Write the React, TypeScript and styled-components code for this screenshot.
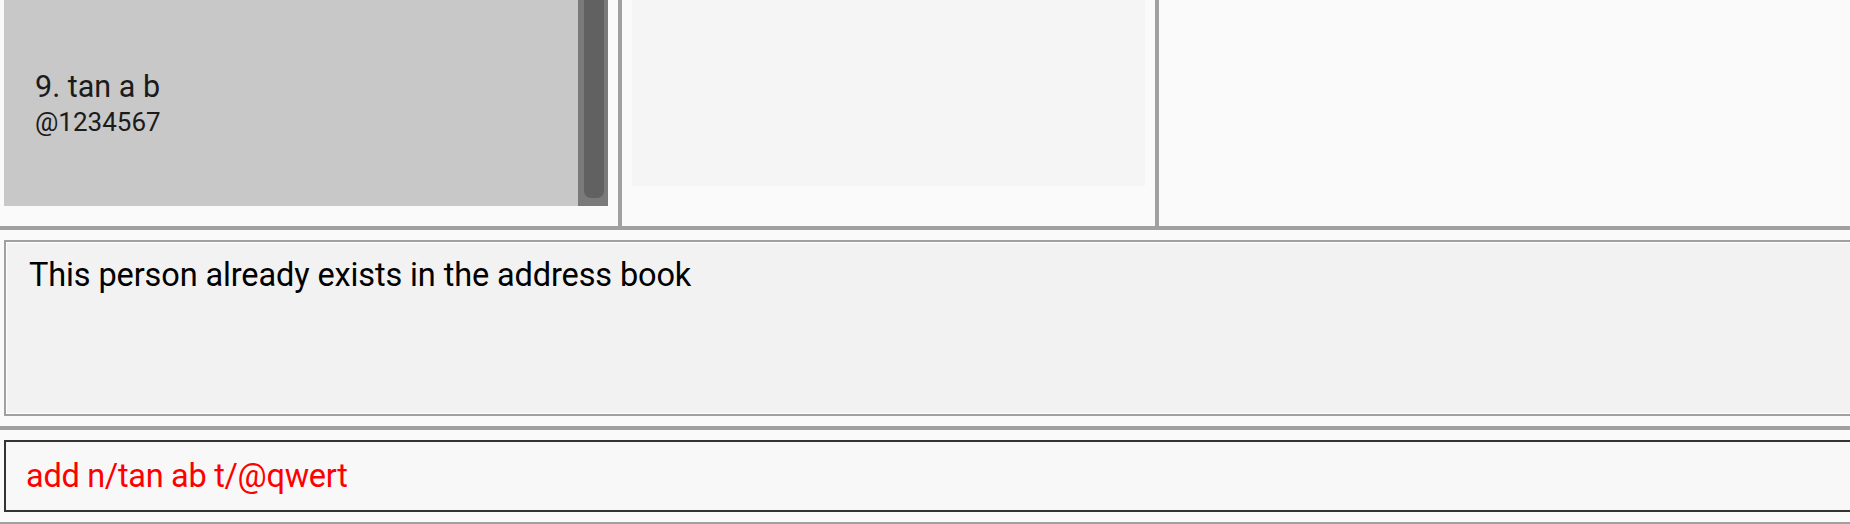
import React from "react";
import styled, { createGlobalStyle } from "styled-components";

const GlobalStyle = createGlobalStyle`
  html, body {
    margin: 0;
    padding: 0;
    background: #fafafa;
    overflow: hidden;
  }
  * {
    box-sizing: border-box;
  }
`;

const Window = styled.div`
  width: 1850px;
  height: 524px;
  display: flex;
  flex-direction: column;
  overflow: hidden;
  background: #fafafa;
  font-family: Roboto, "Liberation Sans", sans-serif;
`;

const TopRow = styled.div`
  display: flex;
  height: 230px;
  flex-shrink: 0;
  border-bottom: 4px solid #a0a0a0;
`;

const Pane = styled.div<{ $width?: number; $divider?: boolean }>`
  display: flex;
  flex: ${(p) => (p.$width ? `0 0 ${p.$width}px` : "1")};
  border-right: ${(p) => (p.$divider ? "4px solid #a0a0a0" : "none")};
`;

const ListPane = styled(Pane)`
  padding: 0 10px 20px 4px;
`;

const DetailPane = styled(Pane)`
  padding: 0 10px 40px 10px;
`;

const Card = styled.div`
  flex: 1;
  display: flex;
  background: #c8c8c8;
`;

const CardBody = styled.div`
  flex: 1;
  display: flex;
  flex-direction: column;
  justify-content: center;
  padding-left: 31px;
  color: #1b1b1b;
`;

const Name = styled.div`
  font-size: 30.5px;
  line-height: 36px;
`;

const Handle = styled.div`
  font-size: 26px;
  line-height: 30px;
  margin-top: 2px;
`;

const ScrollTrack = styled.div`
  width: 30px;
  background: #7a7a7a;
  display: flex;
  padding: 0 4px 8px 6px;
`;

const ScrollThumb = styled.div`
  flex: 1;
  background: #616161;
  border-radius: 0 0 7px 7px;
`;

const DetailBox = styled.div`
  flex: 1;
  background: #f5f5f5;
`;

const Section = styled.div<{ $height: number }>`
  height: ${(p) => p.$height}px;
  flex-shrink: 0;
  display: flex;
  padding: 10px 0 10px 4px;
  border-bottom: 4px solid #a0a0a0;
`;

const ResultBox = styled.div`
  flex: 1;
  margin-right: -20px;
  background: #f2f2f2;
  border: 2px solid #a0a0a0;
  box-shadow: inset 0 0 0 1px #ffffff;
  padding: 14px 23px;
  font-size: 32.5px;
  line-height: 38px;
  letter-spacing: -0.12px;
  color: #000;
`;

const CommandBox = styled.div`
  flex: 1;
  margin-right: -20px;
  display: flex;
  align-items: center;
  background: #f8f8f8;
  border: 2px solid #333333;
  padding: 0 20px;
  font-size: 32.5px;
  line-height: 38px;
  letter-spacing: -0.3px;
  color: #ff0000;
`;

export default function App() {
  return (
    <>
      <GlobalStyle />
      <Window>
        <TopRow>
          <ListPane $width={622} $divider>
            <Card>
              <CardBody>
                <Name>9. tan a b</Name>
                <Handle>@1234567</Handle>
              </CardBody>
              <ScrollTrack>
                <ScrollThumb />
              </ScrollTrack>
            </Card>
          </ListPane>
          <DetailPane $width={537} $divider>
            <DetailBox />
          </DetailPane>
          <Pane />
        </TopRow>
        <Section $height={200}>
          <ResultBox>This person already exists in the address book</ResultBox>
        </Section>
        <Section $height={96}>
          <CommandBox>add n/tan ab t/@qwert</CommandBox>
        </Section>
      </Window>
    </>
  );
}
